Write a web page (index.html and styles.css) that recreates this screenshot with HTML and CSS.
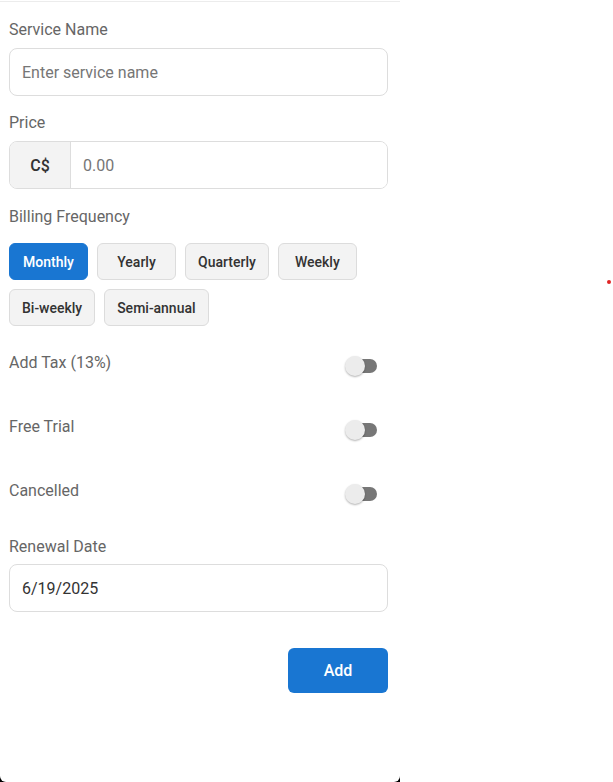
FILE: index.html
```html
<!DOCTYPE html>
<html lang="en">
<head>
<meta charset="utf-8">
<title>Add Service</title>
<link rel="stylesheet" href="styles.css">
</head>
<body>
<div class="device">
  <div class="panel">
    <form class="form">
      <div class="field">
        <label class="label" for="name">Service Name</label>
        <input class="input" id="name" type="text" placeholder="Enter service name">
      </div>
      <div class="field field-price">
        <label class="label" for="price">Price</label>
        <div class="price-group">
          <span class="prefix">C$</span>
          <input class="price-input" id="price" type="text" placeholder="0.00">
        </div>
      </div>
      <div class="field field-billing">
        <span class="label label-billing">Billing Frequency</span>
        <div class="chips">
          <button type="button" class="chip chip-active">Monthly</button>
          <button type="button" class="chip">Yearly</button>
          <button type="button" class="chip">Quarterly</button>
          <button type="button" class="chip">Weekly</button>
          <button type="button" class="chip">Bi-weekly</button>
          <button type="button" class="chip">Semi-annual</button>
        </div>
      </div>
      <div class="toggle-row">
        <span class="toggle-label">Add Tax (13%)</span>
        <span class="switch"><span class="track"></span><span class="thumb"></span></span>
      </div>
      <div class="toggle-row">
        <span class="toggle-label">Free Trial</span>
        <span class="switch"><span class="track"></span><span class="thumb"></span></span>
      </div>
      <div class="toggle-row toggle-last">
        <span class="toggle-label">Cancelled</span>
        <span class="switch"><span class="track"></span><span class="thumb"></span></span>
      </div>
      <div class="field field-date">
        <label class="label label-date" for="date">Renewal Date</label>
        <input class="input input-value" id="date" type="text" value="6/19/2025">
      </div>
      <div class="actions">
        <button type="button" class="add-btn">Add</button>
      </div>
    </form>
  </div>
</div>
<span class="dot"></span>
</body>
</html>
```

FILE: styles.css
```css
* {
  box-sizing: border-box;
}

html, body {
  margin: 0;
  padding: 0;
  background: #ffffff;
}

body {
  font-family: Roboto, "Liberation Sans", Arial, sans-serif;
  width: 613px;
  height: 782px;
  overflow: hidden;
  position: relative;
}

.device {
  width: 400px;
  height: 782px;
  background: #000000;
}

.panel {
  width: 400px;
  height: 782px;
  background: #ffffff;
  border-radius: 0 0 6px 6px;
  padding-top: 1px;
}

.form {
  border-top: 1px solid #ececec;
  width: 400px;
  padding: 18px 12px 0 9px;
}

.field {
  margin-bottom: 17px;
}

.label {
  display: block;
  font-size: 16px;
  line-height: 20px;
  color: #666666;
  margin-bottom: 8px;
}

.field-price {
  margin-bottom: 18px;
}

.label-billing {
  margin-bottom: 16px;
}

.input {
  display: block;
  width: 379px;
  height: 48px;
  border: 1px solid #dddddd;
  border-radius: 8px;
  padding: 0 12px;
  font-family: inherit;
  font-size: 16px;
  color: #333333;
  background: #ffffff;
  outline: none;
}

.input::placeholder,
.price-input::placeholder {
  color: #767676;
}

.price-group {
  display: flex;
  width: 379px;
  height: 48px;
  border: 1px solid #dddddd;
  border-radius: 8px;
  overflow: hidden;
}

.medium {
  font-family: "Roboto Medium", Roboto, "Liberation Sans", sans-serif;
}

.prefix {
  width: 61px;
  flex: none;
  display: flex;
  align-items: center;
  justify-content: center;
  background: #f3f3f3;
  border-right: 1px solid #dddddd;
  font-family: "Roboto Medium", Roboto, "Liberation Sans", sans-serif;
  font-size: 16px;
  font-weight: 500;
  color: #333333;
}

.price-input {
  flex: 1;
  min-width: 0;
  border: none;
  padding: 0 12px;
  font-family: inherit;
  font-size: 16px;
  color: #333333;
  outline: none;
  background: #ffffff;
}

.field-billing {
  margin-bottom: 16px;
}

.chips {
  display: flex;
  flex-wrap: wrap;
  gap: 9px 9px;
}

.chip {
  min-width: 79px;
  height: 37px;
  padding: 0 12px;
  border: 1px solid #dcdcdc;
  border-radius: 6px;
  background: #f3f3f3;
  font-family: "Roboto Medium", Roboto, "Liberation Sans", sans-serif;
  font-size: 14px;
  font-weight: 500;
  color: #333333;
  cursor: pointer;
}

.chip-active {
  background: #1976d2;
  border-color: #1976d2;
  color: #ffffff;
}

.toggle-row {
  display: flex;
  justify-content: space-between;
  align-items: flex-start;
  height: 48px;
  margin-bottom: 16px;
}

.toggle-last {
  margin-bottom: 19px;
}

.toggle-label {
  padding-top: 11px;
  font-size: 16px;
  line-height: 20px;
  color: #666666;
}

.switch {
  position: relative;
  width: 32px;
  height: 20px;
  margin-top: 14px;
  margin-right: 11px;
}

.track {
  position: absolute;
  top: 3px;
  left: 4px;
  right: 0;
  height: 14px;
  border-radius: 7px;
  background: #777777;
}

.thumb {
  position: absolute;
  top: 0;
  left: 0;
  width: 20px;
  height: 20px;
  border-radius: 50%;
  background: #ececec;
  box-shadow: 0 1px 2px rgba(0, 0, 0, 0.3);
}

.field-date {
  margin-bottom: 36px;
}

.label-date {
  margin-bottom: 7px;
}

.input-value {
  color: #333333;
}

.actions {
  display: flex;
  justify-content: flex-end;
  width: 379px;
}

.add-btn {
  width: 100px;
  height: 45px;
  border: none;
  border-radius: 6px;
  background: #1976d2;
  color: #ffffff;
  font-family: "Roboto Medium", Roboto, "Liberation Sans", sans-serif;
  font-size: 16px;
  font-weight: 500;
  cursor: pointer;
}

.dot {
  position: absolute;
  left: 607px;
  top: 280px;
  width: 4px;
  height: 4px;
  border-radius: 50%;
  background: #e02424;
}
```
